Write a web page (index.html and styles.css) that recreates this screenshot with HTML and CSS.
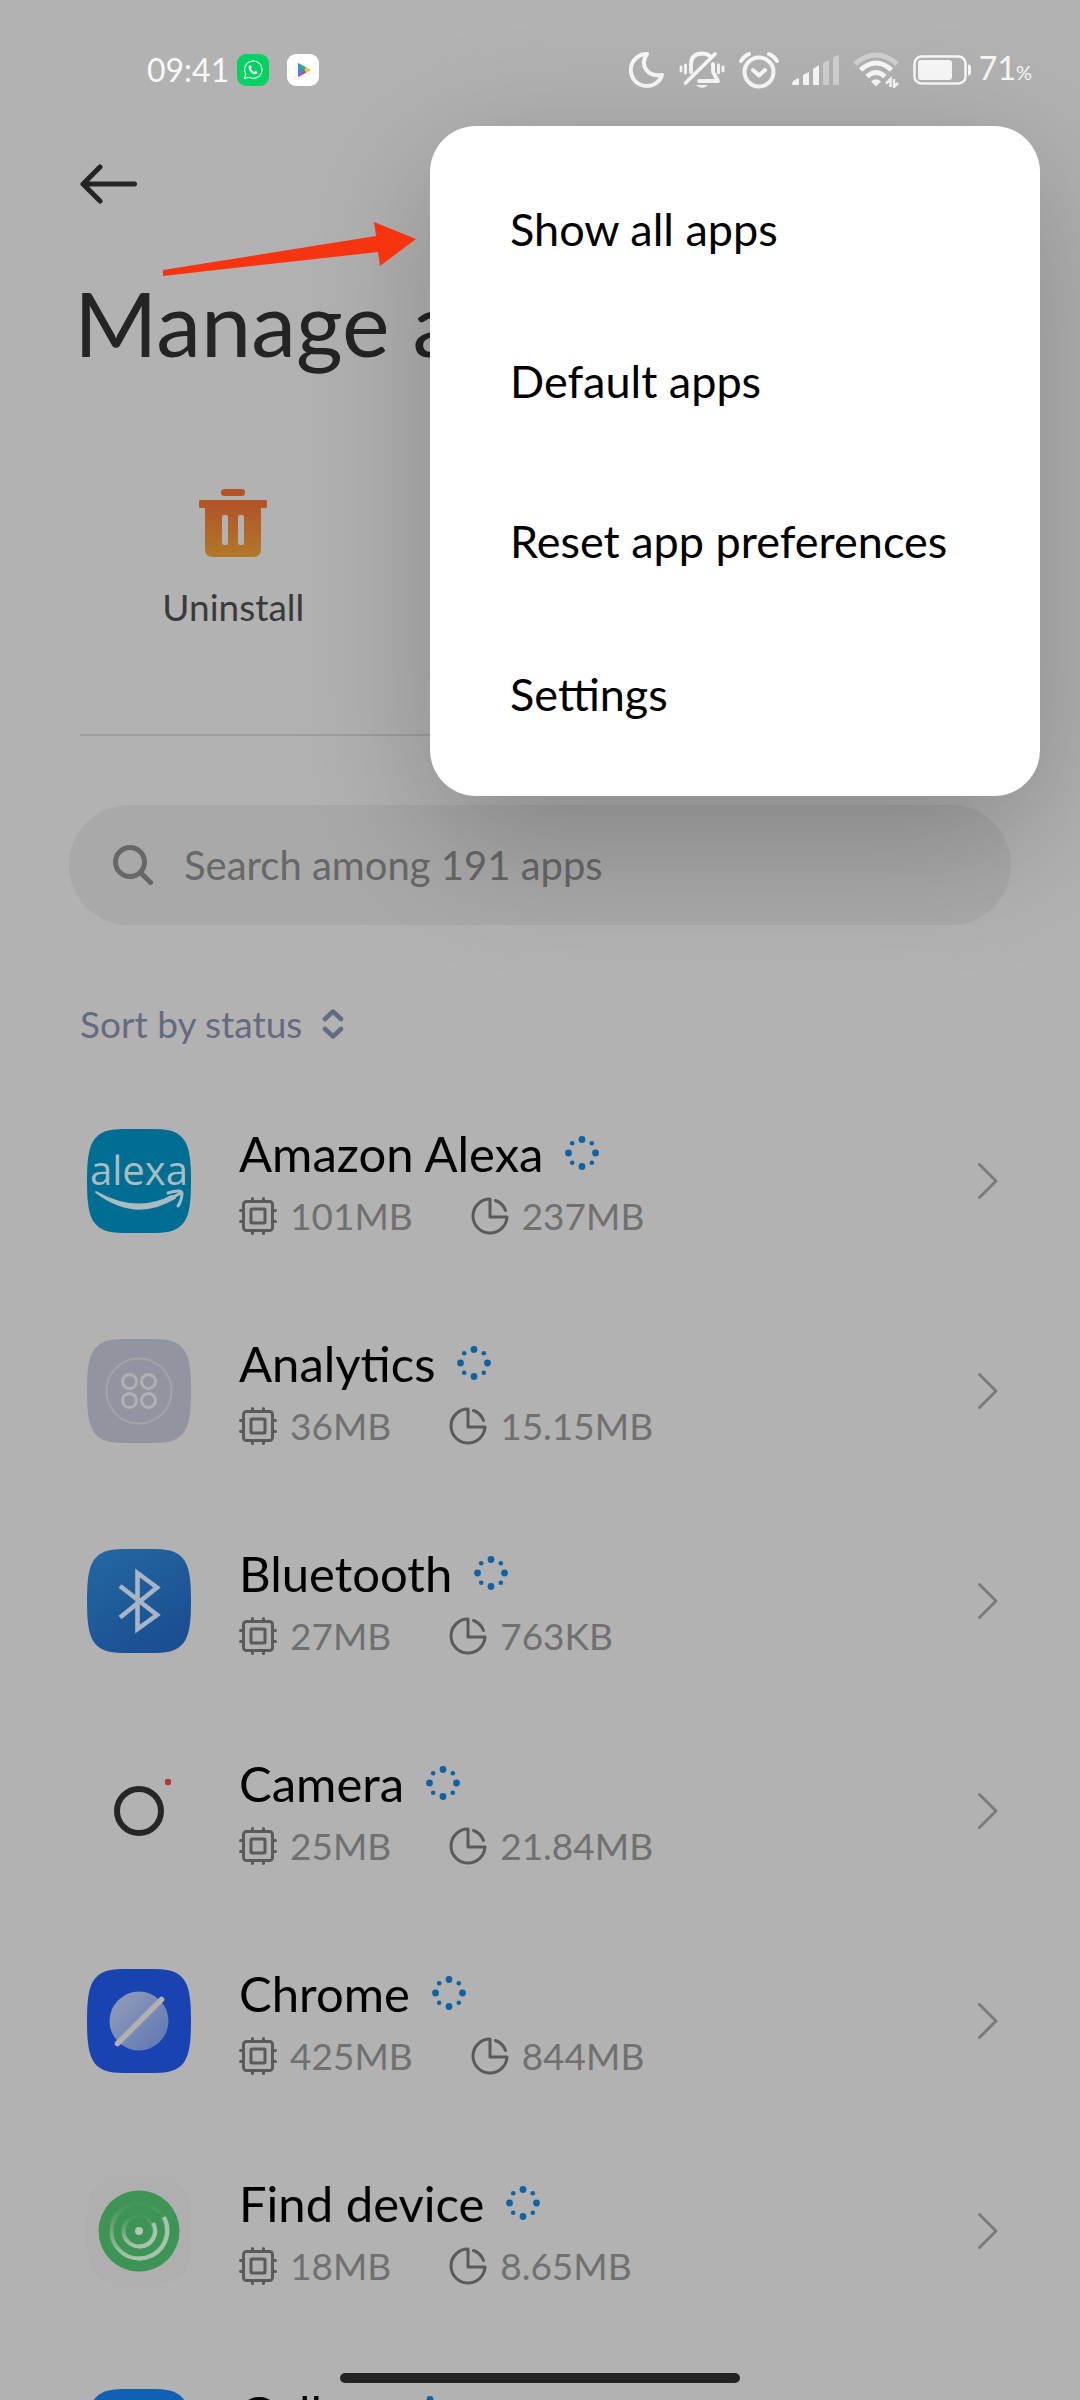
FILE: index.html
```html
<!DOCTYPE html>
<html lang="en">
<head>
    <meta charset="UTF-8">
    <meta name="viewport" content="width=device-width, initial-scale=1.0">
    <title>Manage apps</title>
    <link rel="stylesheet" href="styles.css">
</head>
<body>

    <!-- Shared icons -->
    <svg class="sprite" aria-hidden="true">
        <symbol id="i-busy" viewBox="0 0 34 34">
            <g fill="#0e63a5">
                <circle cx="17" cy="3.5" r="3.4"/><circle cx="30.5" cy="17" r="3.4"/>
                <circle cx="17" cy="30.5" r="3.4"/><circle cx="3.5" cy="17" r="3.4"/>
                <circle cx="26.8" cy="7.2" r="2.3"/><circle cx="26.8" cy="26.8" r="2.3"/>
                <circle cx="7.2" cy="26.8" r="2.3"/><circle cx="7.2" cy="7.2" r="2.3"/>
            </g>
        </symbol>
        <symbol id="i-chip" viewBox="0 0 38 38">
            <g fill="none" stroke="#5a5a5a" stroke-width="3" stroke-linecap="round">
                <rect x="4.5" y="4.5" width="29" height="29" rx="3"/>
                <rect x="12" y="12" width="14" height="14" rx="1"/>
                <path d="M13.5 1.5V4M24.5 1.5V4M13.5 34v2.5M24.5 34v2.5M1.5 13.5H4M1.5 24.5H4M34 13.5h2.5M34 24.5h2.5"/>
            </g>
        </symbol>
        <symbol id="i-disk" viewBox="0 0 38 38">
            <g fill="none" stroke="#5a5a5a" stroke-width="3" stroke-linecap="round" stroke-linejoin="round">
                <path d="M19 2A17 17 0 1 0 36 20H19Z"/>
                <path d="M24.5 3.500A16.500 16.500 0 0 1 34.500 13.500"/>
            </g>
        </symbol>
        <symbol id="i-next" viewBox="0 0 22 38">
            <path d="M2.5 2.5 19 19 2.5 35.5" fill="none" stroke="#7b7b7b" stroke-width="3" stroke-linecap="round" stroke-linejoin="round"/>
        </symbol>
        <symbol id="squircle" viewBox="0 0 104 104">
            <path d="M0 52C0 14 5 0 36 0H68C99 0 104 14 104 52S99 104 68 104H36C5 104 0 90 0 52Z"/>
        </symbol>
    </svg>

    <div class="screen">

        <div class="statusbar">
            <div class="status-left">
                <span class="time">09:41</span>
                <svg class="notif" viewBox="0 0 32 32">
                    <rect width="32" height="32" rx="9" fill="#06d264"/>
                    <path d="M7.5 24.5 8.8 20A8.7 8.7 0 1 1 12.2 23.3Z" fill="none" stroke="#dcf8e8" stroke-width="1.1"/>
                    <path d="M12.5 11.5C13.5 10.8 14.3 12 14.7 13.2L13.9 14.5C14.5 16.1 15.8 17.4 17.5 18L18.6 17.1C20 17.6 20.9 18.3 20.2 19.3 18.9 21.2 16 20.2 13.7 17.9 11.5 15.6 11 12.9 12.5 11.5Z" fill="#fff"/>
                </svg>
                <svg class="notif notif-gap" viewBox="0 0 32 32">
                    <rect width="32" height="32" rx="9" fill="#fff"/>
                    <path d="M11 9V23L18 16Z" fill="#3a8ee0"/>
                    <path d="M11.500 9 19.500 13.500 17.500 16.200 11 9.500Z" fill="#33b06a"/>
                    <path d="M11.500 23 19.500 18.500 17.500 15.800 11 22.500Z" fill="#d9455f"/>
                    <path d="M19 13.200 23 15.300Q23.700 16 23 16.700L19 18.800 17.500 16Z" fill="#f4c13a"/>
                </svg>
            </div>
            <div class="status-right">
                <svg width="36" height="38" viewBox="0 0 36 38">
                    <path d="M18 3A16 16 0 1 0 33 24C19 26 10 15 18 3Z" fill="none" stroke="#f8f8f8" stroke-width="4" stroke-linejoin="round"/>
                </svg>
                <svg class="bell" width="46" height="38" viewBox="0 0 46 38">
                    <g fill="none" stroke="#f8f8f8" stroke-width="3.800" stroke-linecap="round" stroke-linejoin="round">
                        <path d="M12 21V13Q12 3 23 2.500 28 2.500 31 5"/>
                        <path d="M34 13V21L39 30H20"/>
                        <path d="M6.500 32 36 3"/>
                        <path d="M6.500 14V22M2 16V20M39.500 14V22M44 16V20" stroke-width="2.800"/>
                    </g>
                    <path d="M17 34H29Q23 40 17 34Z" fill="#f8f8f8"/>
                </svg>
                <svg class="alarm" width="40" height="38" viewBox="0 0 40 38">
                    <g fill="none" stroke="#f8f8f8" stroke-width="4" stroke-linecap="round" stroke-linejoin="round">
                        <circle cx="20" cy="21" r="14.500"/>
                        <path d="M14 19 20 24.500 26 19"/>
                        <path d="M2 10Q5 5 10 3M38 10Q35 5 30 3"/>
                    </g>
                </svg>
                <svg class="signal" width="48" height="32" viewBox="0 0 48 32">
                    <path d="M0 30Q0 26 7 24V31H1Q0 31 0 30ZM11 21 17 18V31H11ZM21 15 27 11V31H21Z" fill="#f8f8f8"/>
                    <path d="M31 9 37 6V31H31ZM41 4Q44 1 47 1V31H41Z" fill="#d0d0d0"/>
                </svg>
                <svg class="wifi" width="46" height="36" viewBox="0 0 46 36">
                    <g fill="none" stroke-width="5">
                        <path d="M2 12Q23-6 44 12" stroke="#d0d0d0"/>
                        <path d="M7.500 18Q23 4 38.500 18M14 24.500Q23 16.500 32 24.500" stroke="#f8f8f8"/>
                    </g>
                    <path d="M18 29.500Q23 25 28 29.500L23 34.500Z" fill="#f8f8f8"/>
                    <path d="M37.500 35V27L33 31.500M41 27V35L45 31" fill="none" stroke="#f8f8f8" stroke-width="2.500"/>
                </svg>
                <svg class="battery" width="60" height="32" viewBox="0 0 60 32">
                    <rect x="1.500" y="2.500" width="51" height="27" rx="7" fill="none" stroke="#f8f8f8" stroke-width="2.600"/>
                    <rect x="5" y="6" width="34" height="20" rx="3" fill="#f8f8f8"/>
                    <path d="M55 10.500Q58 10.500 58 13V19Q58 21.500 55 21.500Z" fill="#f8f8f8"/>
                </svg>
                <span class="percent">71<small>%</small></span>
            </div>
        </div>

        <header>
            <button class="back" type="button" aria-label="Back">
                <svg width="58" height="40" viewBox="0 0 58 40">
                    <path d="M20 3 3 20 20 37M3 20H54.500" fill="none" stroke="#242424" stroke-width="5" stroke-linecap="round" stroke-linejoin="round"/>
                </svg>
            </button>
            <h1>Manage apps</h1>
        </header>

        <div class="actions">
            <button class="action" type="button">
                <svg width="68" height="68" viewBox="0 0 68 68">
                    <defs>
                        <linearGradient id="trash" x1="0" y1="0" x2="0" y2="68" gradientUnits="userSpaceOnUse">
                            <stop offset="0.200" stop-color="#b25428"/>
                            <stop offset="1" stop-color="#b1782a"/>
                        </linearGradient>
                    </defs>
                    <g fill="url(#trash)">
                        <rect x="22" y="0" width="24" height="7" rx="3.500"/>
                        <path fill-rule="evenodd" d="M1.500 11H66.500Q68 11 68 12.500V17.500Q68 19 66.500 19H62V60Q62 68 54 68H14Q6 68 6 60V19H1.500Q0 19 0 17.500V12.500Q0 11 1.500 11ZM25 26Q23 26 23 28V54Q23 56 25 56H27Q29 56 29 54V28Q29 26 27 26ZM41 26Q39 26 39 28V54Q39 56 41 56H43Q45 56 45 54V28Q45 26 43 26Z"/>
                    </g>
                </svg>
                <span>Uninstall</span>
            </button>
        </div>

        <label class="search">
            <svg width="40" height="40" viewBox="0 0 40 40">
                <g fill="none" stroke="#676767" stroke-width="5" stroke-linecap="round">
                    <circle cx="17" cy="17" r="14.500"/>
                    <path d="M28 28 37.500 37.500"/>
                </g>
            </svg>
            <input type="search" placeholder="Search among 191 apps" aria-label="Search apps">
        </label>

        <button class="sort" type="button">
            Sort by status
            <svg width="22" height="30" viewBox="0 0 22 30">
                <path d="M3 10 11 2.500 19 10M3 20 11 27.500 19 20" fill="none" stroke="#656a80" stroke-width="4.500" stroke-linecap="round" stroke-linejoin="round"/>
            </svg>
        </button>

        <div class="list">
            <a class="app" href="#">
                <svg class="logo" viewBox="0 0 104 104">
                    <use href="#squircle" fill="#006e92"/>
                    <text class="alexa" x="52" y="56" text-anchor="middle">alexa</text>
                    <path d="M9 63Q48 93 88 69L85 67Q50 86 9 63Z" fill="#a9bcc2" stroke="#a9bcc2" stroke-width="2" stroke-linejoin="round"/>
                    <path d="M81 64Q94 60 95 64 95 71 91 77M84 69 94 64" fill="none" stroke="#a9bcc2" stroke-width="3" stroke-linecap="round"/>
                </svg>
                <div class="info">
                    <div class="name">Amazon Alexa <svg class="busy"><use href="#i-busy"/></svg></div>
                    <div class="usage">
                        <span><svg><use href="#i-chip"/></svg>101MB</span>
                        <span><svg><use href="#i-disk"/></svg>237MB</span>
                    </div>
                </div>
                <svg class="next"><use href="#i-next"/></svg>
            </a>

            <a class="app" href="#">
                <svg class="logo" viewBox="0 0 104 104">
                    <use href="#squircle" fill="#92959f"/>
                    <circle cx="52" cy="52" r="32.500" fill="none" stroke="#a2a4aa" stroke-width="2"/>
                    <g fill="none" stroke="#b0b1b4" stroke-width="3">
                        <circle cx="42.500" cy="42.500" r="7"/><circle cx="61.500" cy="42.500" r="7"/>
                        <circle cx="42.500" cy="61.500" r="7"/><circle cx="61.500" cy="61.500" r="7"/>
                    </g>
                </svg>
                <div class="info">
                    <div class="name">Analytics <svg class="busy"><use href="#i-busy"/></svg></div>
                    <div class="usage">
                        <span><svg><use href="#i-chip"/></svg>36MB</span>
                        <span><svg><use href="#i-disk"/></svg>15.15MB</span>
                    </div>
                </div>
                <svg class="next"><use href="#i-next"/></svg>
            </a>

            <a class="app" href="#">
                <svg class="logo" viewBox="0 0 104 104">
                    <defs>
                        <linearGradient id="bt" x1="0" y1="0" x2="0.600" y2="1">
                            <stop offset="0" stop-color="#2468a2"/>
                            <stop offset="1" stop-color="#1a4f92"/>
                        </linearGradient>
                    </defs>
                    <use href="#squircle" fill="url(#bt)"/>
                    <path d="M33 37 70 66 50.500 80V24L70 38.500 33 68.500" fill="none" stroke="#a9b4c6" stroke-width="4.600"/>
                </svg>
                <div class="info">
                    <div class="name">Bluetooth <svg class="busy"><use href="#i-busy"/></svg></div>
                    <div class="usage">
                        <span><svg><use href="#i-chip"/></svg>27MB</span>
                        <span><svg><use href="#i-disk"/></svg>763KB</span>
                    </div>
                </div>
                <svg class="next"><use href="#i-next"/></svg>
            </a>

            <a class="app" href="#">
                <svg class="logo" viewBox="0 0 104 104">
                    <circle cx="52" cy="52" r="22" fill="none" stroke="#262626" stroke-width="6"/>
                    <circle cx="81" cy="23" r="3.200" fill="#b03838"/>
                </svg>
                <div class="info">
                    <div class="name">Camera <svg class="busy"><use href="#i-busy"/></svg></div>
                    <div class="usage">
                        <span><svg><use href="#i-chip"/></svg>25MB</span>
                        <span><svg><use href="#i-disk"/></svg>21.84MB</span>
                    </div>
                </div>
                <svg class="next"><use href="#i-next"/></svg>
            </a>

            <a class="app" href="#">
                <svg class="logo" viewBox="0 0 104 104">
                    <defs>
                        <linearGradient id="planet" x1="0" y1="0" x2="1" y2="1">
                            <stop offset="0.200" stop-color="#8a97b8"/>
                            <stop offset="1" stop-color="#5b75b4"/>
                        </linearGradient>
                    </defs>
                    <use href="#squircle" fill="#1843b0"/>
                    <circle cx="52" cy="52" r="29.500" fill="url(#planet)"/>
                    <path d="M30.500 74.500 74.500 30.500" stroke="#b2b2b2" stroke-width="5.500" stroke-linecap="round"/>
                </svg>
                <div class="info">
                    <div class="name">Chrome <svg class="busy"><use href="#i-busy"/></svg></div>
                    <div class="usage">
                        <span><svg><use href="#i-chip"/></svg>425MB</span>
                        <span><svg><use href="#i-disk"/></svg>844MB</span>
                    </div>
                </div>
                <svg class="next"><use href="#i-next"/></svg>
            </a>

            <a class="app" href="#">
                <svg class="logo" viewBox="0 0 104 104">
                    <defs>
                        <linearGradient id="ring" x1="0" y1="0" x2="0" y2="1">
                            <stop offset="0" stop-color="#419558"/>
                            <stop offset="0.500" stop-color="#6aa87a"/>
                            <stop offset="1" stop-color="#a8c4ae"/>
                        </linearGradient>
                    </defs>
                    <use href="#squircle" fill="#afafaf"/>
                    <circle cx="52" cy="52" r="40.500" fill="#3d9455"/>
                    <g fill="none" stroke="url(#ring)" stroke-width="4">
                        <circle cx="52" cy="52" r="27.500"/>
                        <circle cx="52" cy="52" r="15.500"/>
                    </g>
                    <g fill="none" stroke="#a8c4ae" stroke-width="4">
                        <path d="M77 38A28 28 0 0 1 52 79.500M66 44A15.500 15.500 0 0 1 52 67.500"/>
                    </g>
                    <path d="M64 42 75 35" stroke="#3d9455" stroke-width="5"/>
                    <circle cx="52" cy="52" r="4" fill="#b0c8b4"/>
                </svg>
                <div class="info">
                    <div class="name">Find device <svg class="busy"><use href="#i-busy"/></svg></div>
                    <div class="usage">
                        <span><svg><use href="#i-chip"/></svg>18MB</span>
                        <span><svg><use href="#i-disk"/></svg>8.65MB</span>
                    </div>
                </div>
                <svg class="next"><use href="#i-next"/></svg>
            </a>

            <a class="app" href="#">
                <svg class="logo" viewBox="0 0 104 104">
                    <use href="#squircle" fill="#1060b6"/>
                </svg>
                <div class="info">
                    <div class="name">Gallery <svg class="busy"><use href="#i-busy"/></svg></div>
                    <div class="usage"></div>
                </div>
                <svg class="next"><use href="#i-next"/></svg>
            </a>
        </div>

        <div class="menu">
            <button type="button">Show all apps</button>
            <button type="button">Default apps</button>
            <button type="button">Reset app preferences</button>
            <button type="button">Settings</button>
        </div>

        <svg class="pointer" viewBox="0 0 254 56" aria-hidden="true">
            <path d="M0 49 213 15 211 1 253 18 217 45 215 31 0 55Z" fill="#f73310"/>
        </svg>

        <div class="homebar"></div>
    </div>

</body>
</html>
```

FILE: styles.css
```css
* { box-sizing: border-box; }
body { margin: 0; background: #b2b2b2; color: #000; font-family: Lato, "Open Sans", sans-serif; }
button, input { font: inherit; color: inherit; background: none; border: none; padding: 0; margin: 0; text-align: left; cursor: pointer; }
svg { display: block; flex: none; }
.sprite { position: absolute; width: 0; height: 0; }

.screen { position: relative; height: 100vh; overflow: hidden; }

/* status bar */
.statusbar { display: flex; justify-content: space-between; align-items: center; height: 140px; padding: 0 48px 0 147px; color: #f8f8f8; font-size: 32px; line-height: 40px; }
.status-left, .status-right { display: flex; align-items: center; }
.time { margin-right: 8px; }
.notif { width: 32px; height: 32px; }
.notif-gap { margin-left: 18px; }
.bell, .alarm { margin-left: 14px; }
.signal, .wifi { margin-left: 13px; }
.battery { margin-left: 14px; }
.percent { margin-left: 6px; }
.percent small { font-size: 20px; }

/* title */
header { padding: 0 74px; }
.back { display: flex; align-items: center; height: 88px; padding-left: 6px; }
h1 { margin: 38px 0 0; font-size: 90px; line-height: 112px; font-weight: 400; color: #242424; white-space: nowrap; }

/* actions */
.actions { display: grid; grid-template-columns: repeat(3, 1fr); margin: 0 80px; padding: 111px 0 103px; border-bottom: 2px solid #9f9f9f; }
.action { display: flex; flex-direction: column; align-items: center; gap: 26px; font-size: 37px; line-height: 48px; color: #3a3a3a; }

/* search and sort */
.search { display: flex; align-items: center; gap: 31px; height: 120px; margin: 69px 69px 0; padding: 0 44px; border-radius: 60px; background: #a9a9a9; }
.search input { flex: 1; min-width: 0; font-size: 40px; line-height: 48px; color: #676767; outline: none; }
.search input::placeholder { color: #676767; opacity: 1; }
.sort { display: flex; align-items: center; gap: 20px; margin: 75px 80px 28px; font-size: 37px; line-height: 48px; color: #656a80; }

/* app list */
.app { display: flex; align-items: center; height: 210px; padding: 0 81px 0 87px; color: #000; text-decoration: none; }
.logo { width: 104px; height: 104px; }
.alexa { font-family: "Open Sans", sans-serif; font-size: 40px; fill: #a9bcc2; }
.info { flex: 1; margin-left: 48px; }
.name { display: flex; align-items: center; gap: 22px; font-size: 49px; line-height: 60px; }
.busy { width: 34px; height: 34px; }
.usage { display: flex; gap: 58px; height: 48px; margin-top: 9px; font-size: 37px; line-height: 48px; color: #707070; }
.usage span { display: flex; align-items: center; gap: 13px; }
.usage svg { width: 38px; height: 38px; }
.next { width: 22px; height: 38px; }

/* overflow menu */
.menu { position: absolute; top: 126px; right: 40px; width: 610px; max-width: calc(100% - 80px); padding: 30px 0; border-radius: 46px; background: #fff; box-shadow: 0 40px 140px rgba(0, 0, 0, 0.24); }
.menu button { display: block; width: 100%; height: 160px; padding: 0 80px; font-size: 45px; white-space: nowrap; }
.menu button:first-child, .menu button:last-child { height: 145px; }

.pointer { position: absolute; left: 163px; top: 221px; width: 254px; height: 56px; }
.homebar { position: absolute; left: 50%; bottom: 17px; width: 400px; height: 10px; border-radius: 5px; background: #242424; transform: translateX(-50%); }
```
